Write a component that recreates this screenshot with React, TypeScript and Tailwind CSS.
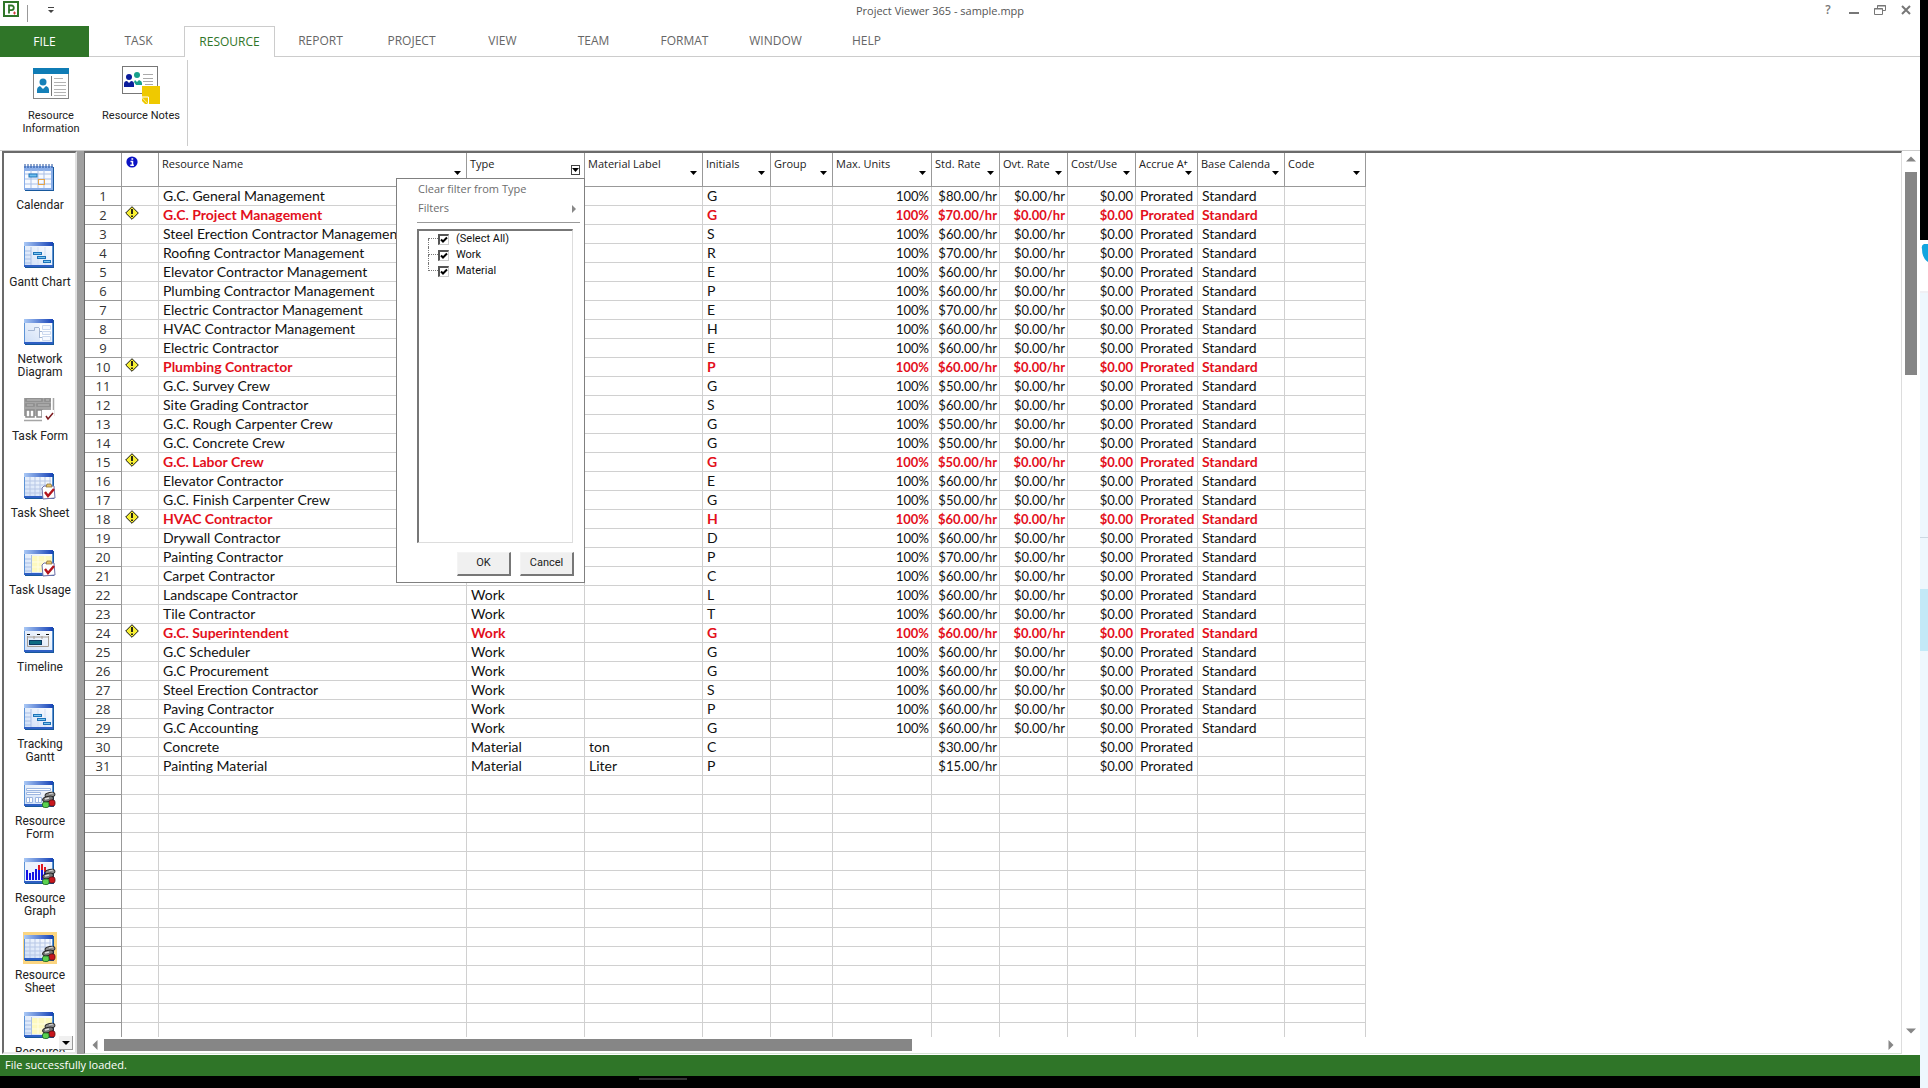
import React, { useState } from 'react';
import { clsx } from 'clsx';

const TABS = ['TASK', 'RESOURCE', 'REPORT', 'PROJECT', 'VIEW', 'TEAM', 'FORMAT', 'WINDOW', 'HELP'];

const COLUMNS = [
  { key: 'name', label: 'Resource Name', width: 308 },
  { key: 'type', label: 'Type', width: 118 },
  { key: 'material', label: 'Material Label', width: 118 },
  { key: 'initials', label: 'Initials', width: 68 },
  { key: 'group', label: 'Group', width: 62 },
  { key: 'units', label: 'Max. Units', width: 99, right: true },
  { key: 'rate', label: 'Std. Rate', width: 68, right: true },
  { key: 'overtime', label: 'Ovt. Rate', width: 68, right: true },
  { key: 'cost', label: 'Cost/Use', width: 68, right: true },
  { key: 'accrue', label: 'Accrue At', width: 62 },
  { key: 'calendar', label: 'Base Calenda', width: 87 },
  { key: 'code', label: 'Code', width: 81 },
];

type Row = Record<string, string> & { name: string };

const work = (name: string, initials: string, rate: number): Row => ({
  name,
  type: 'Work',
  initials,
  units: '100%',
  rate: `$${rate}.00/hr`,
  overtime: '$0.00/hr',
  cost: '$0.00',
  accrue: 'Prorated',
  calendar: 'Standard',
});

const ROWS: Row[] = [
  work('G.C. General Management', 'G', 80),
  work('G.C. Project Management', 'G', 70),
  work('Steel Erection Contractor Management', 'S', 60),
  work('Roofing Contractor Management', 'R', 70),
  work('Elevator Contractor Management', 'E', 60),
  work('Plumbing Contractor Management', 'P', 60),
  work('Electric Contractor Management', 'E', 70),
  work('HVAC Contractor Management', 'H', 60),
  work('Electric Contractor', 'E', 60),
  work('Plumbing Contractor', 'P', 60),
  work('G.C. Survey Crew', 'G', 50),
  work('Site Grading Contractor', 'S', 60),
  work('G.C. Rough Carpenter Crew', 'G', 50),
  work('G.C. Concrete Crew', 'G', 50),
  work('G.C. Labor Crew', 'G', 50),
  work('Elevator Contractor', 'E', 60),
  work('G.C. Finish Carpenter Crew', 'G', 50),
  work('HVAC Contractor', 'H', 60),
  work('Drywall Contractor', 'D', 60),
  work('Painting Contractor', 'P', 70),
  work('Carpet Contractor', 'C', 60),
  work('Landscape Contractor', 'L', 60),
  work('Tile Contractor', 'T', 60),
  work('G.C. Superintendent', 'G', 60),
  work('G.C Scheduler', 'G', 60),
  work('G.C Procurement', 'G', 60),
  work('Steel Erection Contractor', 'S', 60),
  work('Paving Contractor', 'P', 60),
  work('G.C Accounting', 'G', 60),
  { name: 'Concrete', type: 'Material', material: 'ton', initials: 'C', rate: '$30.00/hr', cost: '$0.00', accrue: 'Prorated' },
  { name: 'Painting Material', type: 'Material', material: 'Liter', initials: 'P', rate: '$15.00/hr', cost: '$0.00', accrue: 'Prorated' },
];

// row numbers of overallocated resources
const OVERALLOCATED = [2, 10, 15, 18, 24];
const ROW_COUNT = 60;

const VIEWS = [
  { label: 'Calendar', icon: 'calendar' },
  { label: 'Gantt Chart', icon: 'gantt' },
  { label: 'Network Diagram', icon: 'network' },
  { label: 'Task Form', icon: 'taskform' },
  { label: 'Task Sheet', icon: 'sheet', badge: 'task' },
  { label: 'Task Usage', icon: 'usage', badge: 'task' },
  { label: 'Timeline', icon: 'timeline' },
  { label: 'Tracking Gantt', icon: 'gantt' },
  { label: 'Resource Form', icon: 'form', badge: 'people' },
  { label: 'Resource Graph', icon: 'graph', badge: 'people' },
  { label: 'Resource Sheet', icon: 'sheet', badge: 'people' },
  { label: 'Resource Usage', icon: 'usage', badge: 'people' },
];

function WindowFrame() {
  return (
    <g>
      <rect x="2" y="4" width="29" height="25" fill="#17589c" />
      <rect x="1" y="3" width="29" height="25" fill="#5c93d6" />
      <rect x="2" y="4" width="27" height="22" fill="url(#pane)" />
      <rect x="1" y="3" width="29" height="4" fill="url(#bar)" />
      <rect x="1" y="26" width="29" height="2" fill="#2e5fc4" />
    </g>
  );
}

function TaskBadge() {
  return (
    <g>
      <path d="M21 16h10l1 12-12 1-1-11z" fill="#fff" stroke="#6d6fa8" />
      <path d="M23 17l1-3h4l1 3z" fill="#e5c469" stroke="#866a30" strokeWidth=".7" />
      <path d="M22 22l3 4 6-7" fill="none" stroke="#b3141c" strokeWidth="2.4" />
    </g>
  );
}

function PeopleBadge() {
  return (
    <g>
      <ellipse cx="27" cy="17" rx="5" ry="2.600" fill="#8f8f8f" stroke="#2b2b2b" transform="rotate(-12 27 17)" />
      <path d="M26 16l4-1" stroke="#d5d5d5" />
      <ellipse cx="25" cy="21" rx="5.500" ry="2.600" fill="#777" stroke="#222" transform="rotate(-12 25 21)" />
      <path d="M22 21l4-1" stroke="#dcdcdc" strokeWidth="1.500" />
      <rect x="26" y="22" width="6" height="6" rx="2" fill="#c8161d" stroke="#5c0f13" strokeWidth=".8" />
      <rect x="19.500" y="24" width="6.500" height="5.500" rx="2" fill="#5ad14f" stroke="#17601b" strokeWidth=".8" />
    </g>
  );
}

function ViewIcon({ kind, badge }: { kind: string; badge?: string }) {
  return (
    <svg width="34" height="32" viewBox="0 0 34 32" aria-hidden="true">
      {kind === 'calendar' && (
        <g>
          <rect x="2" y="5" width="29" height="24" fill="#17589c" />
          <rect x="1" y="4" width="29" height="24" fill="#8aaee8" />
          <rect x="2" y="9" width="26" height="17" fill="#f7faff" />
          <path d="M2 12h26M2 17h26M2 22h26M8 8v18M15 8v18M21 8v18" stroke="#a9bfe6" />
          <rect x="6" y="12" width="8" height="3" fill="#6fc0ef" stroke="#1d73b9" />
          <rect x="15.500" y="17.500" width="6" height="5" fill="none" stroke="#e5a448" />
          <path d="M2 2v4M5 2v4M8 2v4M11 2v4M14 2v4M17 2v4M20 2v4M23 2v4M26 2v4M29 2v4" stroke="#1e4c9b" />
        </g>
      )}
      {kind === 'taskform' && (
        <g fill="#fff" stroke="#8b8b8b" strokeWidth="1.500">
          <path d="M1 5h27v18H1z" fill="#a5a5a5" stroke="none" />
          <path d="M3 6h16v2H3zM22 6h5v2h-5zM3 11h8v2H3zM14 11h13v2H14zM3 17h8v7H3zM14 17h5v7h-5z" />
          <path d="M30.500 5v18M1 27.500h18" fill="none" stroke="#a5a5a5" />
          <path d="M7 17v7" />
          <rect x="19" y="17" width="12" height="10" stroke="none" />
          <path d="M23 23l2 3 5-6" fill="none" stroke="#7c1a1e" />
        </g>
      )}
      {kind !== 'calendar' && kind !== 'taskform' && <WindowFrame />}
      {kind === 'gantt' && (
        <g>
          <path d="M2 12h6M2 16h6M2 20h6M2 24h6M8 8v18" stroke="#a9bfe6" />
          <path d="M15 8v18M22 8v18" stroke="#d3dff3" />
          <g fill="#7cc6ee" stroke="#1d73b9">
            <rect x="10.500" y="13.500" width="8" height="2" />
            <rect x="14.500" y="17.500" width="8" height="2" />
            <rect x="20.500" y="21.500" width="7" height="2" />
          </g>
        </g>
      )}
      {kind === 'network' && (
        <g>
          <path d="M17 8h11v17H17z" fill="#fff" />
          <path d="M5 14.500h6.500v-3H16M16.500 12v10M16 15.500h3M16 21.500h3" fill="none" stroke="#a4b6d3" />
          <path d="M19.500 9.500h8v4h-8zM19.500 15.500h8v3h-8zM19.500 20.500h8v4h-8z" fill="#f6f9ff" stroke="#cbd8ee" />
        </g>
      )}
      {kind === 'sheet' && (
        <path d="M2 11h26M2 15h26M2 19h26M2 23h26M7 7v19M12 7v19M17 7v19M22 7v19M27 7v19" stroke="#b7c7e6" />
      )}
      {kind === 'usage' && (
        <g>
          <path d="M9 9h20v16H9z" fill="#fdf9bf" />
          <path d="M2 12h6M2 16h6M2 20h6M2 24h6M8.500 8v18" stroke="#a9bfe6" />
          <path d="M9 15h20M9 20h20M15 9v16M22 9v16" stroke="#fffde6" />
        </g>
      )}
      {kind === 'timeline' && (
        <g fill="none">
          <path d="M4 10.500h3M14 10.500h3M23 10.500h3" stroke="#111" />
          <path d="M4.500 12v10.500h21V12M4.500 13h21M11 12v3M19 12v3" stroke="#a59c93" />
          <rect x="6.500" y="16.500" width="12" height="4" fill="#0d6c83" stroke="#0b3b66" />
        </g>
      )}
      {kind === 'form' && (
        <g fill="#fff" stroke="#9db6e0">
          <path d="M3.500 10.500h24v2h-24zM3.500 14.500h14v2h-14zM3.500 19.500h6v5h-6zM12.500 19.500h6v5h-6zM6.500 19v5M15.500 19v5" />
        </g>
      )}
      {kind === 'graph' && (
        <g>
          <path d="M2 8h27v18H2z" fill="#edf3fd" />
          <path d="M4 15v10M7 18v7M10 17v8M13 14v11M16 12v13M19 15v10M22 13v12" stroke="#1414e6" strokeWidth="2" />
          <path d="M16 10v5M19 9v6M22 12v5" stroke="#df1822" strokeWidth="2" />
        </g>
      )}
      {badge === 'task' && <TaskBadge />}
      {badge === 'people' && <PeopleBadge />}
    </svg>
  );
}

function ResourceInfoIcon() {
  return (
    <svg width="38" height="38" viewBox="0 0 38 38" aria-hidden="true">
      <rect x="1.500" y="2.500" width="35" height="30" fill="#fff" stroke="#858585" />
      <rect x="1" y="2" width="36" height="6" fill="#0f7cb5" />
      <circle cx="11" cy="16" r="3.500" fill="#1580b8" />
      <path d="M5 27v-3q0-3 3-4l3 3 3-3q3 1 3 4v3z" fill="#1580b8" />
      <path d="M19.500 10v20" stroke="#777" />
      <path d="M22 12.500h9M22 16.500h12M22 19.500h12M22 23.500h12M22 26.500h12M22 29.500h12" stroke="#b3b3b3" />
    </svg>
  );
}

function ResourceNotesIcon() {
  return (
    <svg width="40" height="40" viewBox="0 0 40 40" aria-hidden="true">
      <rect x="1.500" y="1.500" width="35" height="27" fill="#fff" stroke="#777" />
      <circle cx="8" cy="12" r="3" fill="#0a1c9b" />
      <path d="M3 22v-3q0-3 3-3l2 2 2-2q3 0 3 3v3z" fill="#0a1c9b" />
      <circle cx="16" cy="10" r="3" fill="#17a08c" />
      <path d="M13 17l1-2 2 2 2-2q3 1 3 3v2h-6z" fill="#17a08c" />
      <path d="M22 9.500h10M22 13.500h10M22 16.500h10M24 19.500h8" stroke="#aaa" />
      <path d="M21 21h18v18H28l-7-7z" fill="#efc900" />
      <path d="M21 32h6.500v7" fill="#efc900" stroke="#fff" />
      <path d="M21 33l6 6h-3l-3-3z" fill="#efc900" />
    </svg>
  );
}

function WarningIcon() {
  return (
    <svg width="14" height="14" viewBox="0 0 14 14" role="img" aria-label="Overallocated">
      <path d="M7 .7L13.300 7 7 13.300.7 7z" fill="#f8f032" stroke="#111" />
      <path d="M7 3v5M7 9.500v1.500" stroke="#111" strokeWidth="1.800" />
    </svg>
  );
}

function Arrow({ dir, className }: { dir: 'up' | 'down' | 'left' | 'right'; className?: string }) {
  const turn = { down: 0, left: 90, up: 180, right: 270 }[dir];
  return (
    <svg width="10" height="10" viewBox="0 0 10 10" className={className} aria-hidden="true">
      <path d="M0 2.500h10L5 7.500z" fill="currentColor" transform={`rotate(${turn} 5 5)`} />
    </svg>
  );
}

function TitleBar() {
  const control = 'flex h-5 w-[26px] items-center justify-center text-[#777]';
  return (
    <header className="flex h-[26px] shrink-0">
      <div className="flex w-[65px] shrink-0">
        <svg width="18" height="18" viewBox="0 0 18 18" className="ml-[2px]" aria-hidden="true">
          <rect x="2" y="2" width="14" height="14" fill="#fff" stroke="#2f7528" strokeWidth="2" />
          <path d="M7 13.500V5.500h2.500a2.300 2.300 0 010 4.600H7" fill="none" stroke="#2f7528" strokeWidth="1.800" />
          <path d="M12.500 11.500v3M11 13h3" stroke="#d33b3b" />
        </svg>
        <span className="mt-[5px] ml-[7px] h-[17px] w-px bg-[#999]" />
        <button aria-label="Customize quick access toolbar" className="ml-[15px] flex h-5 w-4 items-center justify-center">
          <svg width="6" height="6" viewBox="0 0 6 6">
            <path d="M0 3h6L3 6z" fill="#444" />
            <path d="M0 .5h6" stroke="#444" />
          </svg>
        </button>
      </div>
      <h1 className="flex-1 text-center text-[11px] leading-[22px] text-[#555]">Project Viewer 365 - sample.mpp</h1>
      <div className="flex w-[105px] shrink-0 pr-px">
        <button aria-label="Help" className={clsx(control, 'text-xs font-semibold')}>?</button>
        <button aria-label="Minimize" className={control}>
          <svg width="10" height="10" viewBox="0 0 10 10"><path d="M0 8h10" stroke="currentColor" strokeWidth="2" /></svg>
        </button>
        <button aria-label="Restore" className={control}>
          <svg width="12" height="10" viewBox="0 0 12 10" fill="none" stroke="currentColor">
            <path d="M3.500 3V.5h8v5H9M3 1h9M.5 3.500h8v6h-8zM0 4h9" />
          </svg>
        </button>
        <button aria-label="Close" className={control}>
          <svg width="10" height="10" viewBox="0 0 10 10"><path d="M1 1l8 8M9 1L1 9" stroke="currentColor" strokeWidth="2" /></svg>
        </button>
      </div>
    </header>
  );
}

function Ribbon() {
  return (
    <div className="shrink-0 border-b border-[#ccc]">
      <nav className="flex h-[31px] text-xs text-[#666]">
        <button className="w-[89px] bg-[#2f7528] pt-px text-white">FILE</button>
        <span className="w-1 border-b border-[#ccc]" />
        {TABS.map((tab) => (
          <button
            key={tab}
            className={clsx(
              'w-[91px] pb-px',
              tab === 'RESOURCE' ? 'border-x border-t border-[#ccc] text-[#2f7528]' : 'border-b border-[#ccc]'
            )}
          >
            {tab}
          </button>
        ))}
        <span className="flex-1 border-b border-[#ccc]" />
      </nav>
      <div className="flex h-[93px] pl-[7px] font-['Roboto',sans-serif] text-[11px] leading-[13px] text-[#222]">
        <button className="flex w-[88px] flex-col items-center pt-[9px]">
          <ResourceInfoIcon />
          <span className="mt-[5px] w-16">Resource Information</span>
        </button>
        <button className="flex w-[92px] flex-col items-center pt-2">
          <ResourceNotesIcon />
          <span className="mt-1 whitespace-nowrap">Resource Notes</span>
        </button>
        <span className="mt-[3px] h-[86px] w-px bg-[#ccc]" />
      </div>
    </div>
  );
}

function ViewBar() {
  return (
    <nav className="relative ml-[2px] w-[75px] shrink-0 overflow-hidden border-2 border-[#6b6b6b] border-r-[#e0e0e0] border-b-[#e8e8e8]">
      <ul className="font-['Roboto',sans-serif] text-xs leading-[13px] text-[#222]">
        {VIEWS.map((view) => (
          <li key={view.label} className="h-[77px]">
            <button className="flex h-full w-full flex-col items-center pt-[9px] pl-px">
              <span className={clsx(view.label === 'Resource Sheet' && 'bg-[#fbd580]')}>
                <ViewIcon kind={view.icon} badge={view.badge} />
              </span>
              <span className="mt-[5px] px-1">{view.label}</span>
            </button>
          </li>
        ))}
      </ul>
      <button
        aria-label="Scroll views down"
        className="absolute right-[2px] bottom-[2px] flex h-[14px] w-[14px] items-center justify-center border-r border-b border-[#999] bg-[#f0f0f0]"
      >
        <Arrow dir="down" className="h-2 w-2 text-black" />
      </button>
    </nav>
  );
}

function FilterMenu() {
  const [checked, setChecked] = useState<Record<string, boolean>>({ '(Select All)': true, Work: true, Material: true });
  const button =
    'h-6 w-[54px] border-t border-l border-t-[#f4f4f4] border-l-[#f4f4f4] border-r-2 border-b-2 border-r-[#777] border-b-[#777] bg-[#f0f0f0]';

  return (
    <div className="absolute top-[25px] -right-px z-10 flex h-[405px] w-[189px] flex-col border border-[#808080] bg-white pt-px text-[#6d6d6d]">
      <button className="h-[19px] pl-[21px] text-left">Clear filter from Type</button>
      <button className="flex h-[19px] items-center justify-between pr-[6px] pl-[21px]">
        Filters
        <Arrow dir="right" className="h-2 w-2 text-[#888]" />
      </button>
      <div className="mt-[4px] mr-1 ml-5 h-px bg-[#999]" />
      <ul className="mt-[6px] ml-5 h-[314px] w-[156px] border-t-2 border-l-2 border-r border-b border-t-[#777] border-l-[#777] border-r-[#ddd] border-b-[#ddd] font-['Roboto',sans-serif] text-[11px] leading-4 text-[#111]">
        {Object.keys(checked).map((name, i) => (
          <li key={name} className="flex pl-[9px]">
            <span className="w-[10px]">
              <span className={clsx('block h-2 border-b border-dotted border-[#777]', i > 0 && 'border-l')} />
              {i < 2 && <span className="block h-2 border-l border-dotted border-[#777]" />}
            </span>
            <label className="flex items-center">
              <span className="relative flex">
                <input
                  type="checkbox"
                  checked={checked[name]}
                  onChange={(e) => setChecked({ ...checked, [name]: e.target.checked })}
                  className="h-[11px] w-[11px] appearance-none border-t-2 border-l-2 border-r border-b border-t-[#555] border-l-[#555] border-r-[#ccc] border-b-[#ccc] bg-white"
                />
                {checked[name] && (
                  <svg width="11" height="11" viewBox="0 0 11 11" className="pointer-events-none absolute inset-0">
                    <path d="M3 5.500L5 7.500 9 3.500" fill="none" stroke="#000" strokeWidth="2" />
                  </svg>
                )}
              </span>
              <span className="pl-[7px]">{name}</span>
            </label>
          </li>
        ))}
      </ul>
      <div className="mt-[9px] flex justify-end gap-[9px] pr-[10px] font-['Roboto',sans-serif] text-[11px] text-[#222]">
        <button className={button}>OK</button>
        <button className={button}>Cancel</button>
      </div>
    </div>
  );
}

function ResourceTable() {
  const headCell = 'relative h-[34px] border-r border-b border-[#999] p-0 text-left align-top font-normal';
  return (
    <table className="w-[1281px] table-fixed border-separate border-spacing-0 text-[11px] text-[#222]">
      <colgroup>
        <col style={{ width: 37 }} />
        <col style={{ width: 37 }} />
        {COLUMNS.map((col) => (
          <col key={col.key} style={{ width: col.width }} />
        ))}
      </colgroup>
      <thead>
        <tr>
          <th className={headCell} />
          <th className={headCell}>
            <svg width="12" height="12" viewBox="0 0 12 12" className="mt-[3px] ml-1" role="img" aria-label="Indicators">
              <circle cx="6" cy="6" r="5.600" fill="#0b13c4" />
              <path d="M4.500 5.500H6.500V9M4.300 9.200h3.600M5.400 3h1.800" fill="none" stroke="#fff" strokeWidth="1.500" />
            </svg>
          </th>
          {COLUMNS.map((col) => (
            <th key={col.key} className={headCell}>
              <div className="mr-[7px] overflow-hidden pl-[3px] leading-[22px] whitespace-nowrap">{col.label}</div>
              <button
                aria-label={`Filter ${col.label}`}
                className={clsx(
                  'absolute top-[12px] right-[4px] flex h-[10px] w-[9px] items-center justify-center bg-white text-black',
                  col.key === 'type' && 'border border-[#444]'
                )}
              >
                <svg width="7" height="4" viewBox="0 0 7 4" className={clsx('shrink-0', col.key !== 'type' && 'mt-[5px]')}>
                  <path d="M0 0h7L3.500 4z" fill="currentColor" />
                </svg>
              </button>
              {col.key === 'type' && <FilterMenu />}
            </th>
          ))}
        </tr>
      </thead>
      <tbody className="font-['Lato',sans-serif] leading-[18px] text-[#111]">
        {Array.from({ length: ROW_COUNT }, (_, i) => {
          const row = ROWS[i];
          const over = OVERALLOCATED.includes(i + 1);
          return (
            <tr key={i} className={clsx(over && 'font-bold text-[#e3101c]')}>
              <td className="h-[19px] border-r border-b border-[#999] p-0 text-center font-['Open_Sans',sans-serif] text-[13px] font-normal text-[#333]">
                {row && i + 1}
              </td>
              <td className="border-r border-b border-[#d0d0d0] p-0 pl-[3px] align-top">{over && <WarningIcon />}</td>
              {COLUMNS.map((col) => (
                <td
                  key={col.key}
                  className={clsx(
                    'overflow-hidden border-r border-b border-[#d0d0d0] p-0 whitespace-nowrap',
                    col.right ? 'pr-[2px] text-right text-[13px]' : 'pl-1 text-sm leading-[18px]'
                  )}
                >
                  {row?.[col.key]}
                </td>
              ))}
            </tr>
          );
        })}
      </tbody>
    </table>
  );
}

function DesktopEdge() {
  return (
    <div className="flex w-2 shrink-0 flex-col bg-[#eef7fd]">
      <div className="h-60 bg-black" />
      <div className="h-[51px] bg-white pt-1">
        <svg width="8" height="18" viewBox="0 0 8 18" aria-hidden="true">
          <path d="M8 0H4Q1 1 2 5 2 14 8 18z" fill="#12a5df" />
        </svg>
      </div>
      <div className="h-[247px] border-t-2 border-b border-t-[#f0f0f4] border-b-[#ccd9e2]" />
      <div className="mt-[51px] h-[62px] bg-[#c3e9f7]" />
    </div>
  );
}

export default function App() {
  return (
    <div className="flex h-screen overflow-hidden bg-white font-['Open_Sans',sans-serif]">
      <svg width="0" height="0" className="absolute" aria-hidden="true">
        <defs>
          <linearGradient id="bar" x1="0" x2="1" y1="0" y2="0">
            <stop offset="0" stopColor="#a9c8f5" />
            <stop offset="1" stopColor="#1743b8" />
          </linearGradient>
          <linearGradient id="pane" x1="0" x2="1" y1="1" y2="0">
            <stop offset="0" stopColor="#cfdff7" />
            <stop offset="1" stopColor="#ffffff" />
          </linearGradient>
        </defs>
      </svg>
      <div className="flex min-w-0 flex-1 flex-col">
        <TitleBar />
        <Ribbon />
        <div className="flex min-h-0 flex-1">
          <ViewBar />
          <div className="w-[7px] shrink-0 bg-[#a0a0a0]" />
          <main className="flex min-w-0 flex-1 flex-col border-t-2 border-r border-b border-l border-t-[#6b6b6b] border-r-[#ddd] border-b-[#d5e5d5] border-l-[#6b6b6b]">
            <div className="min-h-0 flex-1 overflow-hidden">
              <ResourceTable />
            </div>
            <div className="flex h-4 shrink-0 items-center gap-1 px-[5px] text-[#868686]">
              <Arrow dir="left" />
              <div className="flex-1">
                <div className="h-3 w-5/11 bg-[#868686]" />
              </div>
              <Arrow dir="right" />
            </div>
          </main>
          <div className="flex w-[18px] shrink-0 flex-col items-center gap-2 pt-[3px] pb-[18px] text-[#868686]">
            <Arrow dir="up" />
            <div className="flex-1">
              <div className="h-[24%] w-3 bg-[#868686]" />
            </div>
            <Arrow dir="down" />
          </div>
        </div>
        <footer className="mt-px h-[21px] shrink-0 bg-[#2f7528] pl-[5px] text-[11px] leading-5 text-white">
          File successfully loaded.
        </footer>
        <div className="h-3 shrink-0 bg-black pt-[2px]">
          <div className="ml-[639px] h-[2px] w-12 bg-[#333]" />
        </div>
      </div>
      <DesktopEdge />
    </div>
  );
}
